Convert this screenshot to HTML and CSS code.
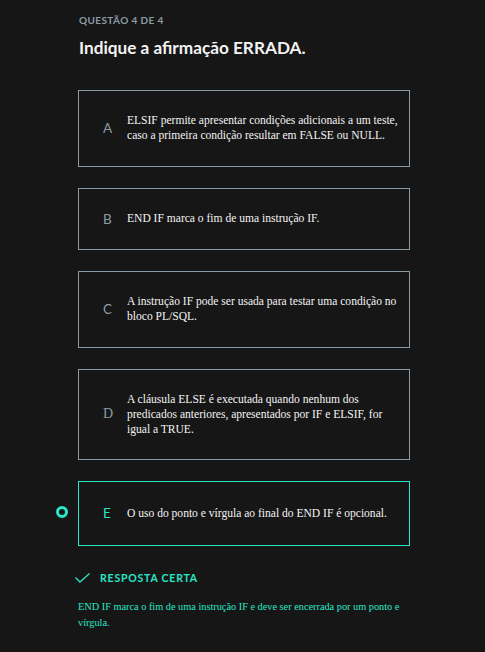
FILE: index.html
```html
<!DOCTYPE html>
<html lang="pt">
<head>
<meta charset="utf-8">
<link rel="stylesheet" href="styles.css">
</head>
<body>
<main class="quiz">
  <div class="counter">QUESTÃO 4 DE 4</div>
  <h1 class="title">Indique a afirmação ERRADA.</h1>
  <div class="options">
    <div class="option">
      <span class="letter">A</span>
      <span class="text">ELSIF permite apresentar condições adicionais a um teste, caso a primeira condição resultar em FALSE ou NULL.</span>
    </div>
    <div class="option">
      <span class="letter">B</span>
      <span class="text">END IF marca o fim de uma instrução IF.</span>
    </div>
    <div class="option">
      <span class="letter">C</span>
      <span class="text">A instrução IF pode ser usada para testar uma condição no bloco PL/SQL.</span>
    </div>
    <div class="option">
      <span class="letter serif">D</span>
      <span class="text">A cláusula ELSE é executada quando nenhum dos predicados anteriores, apresentados por IF e ELSIF, for igual a TRUE.</span>
    </div>
    <div class="option selected">
      <span class="radio"></span>
      <span class="letter">E</span>
      <span class="text">O uso do ponto e vírgula ao final do END IF é opcional.</span>
    </div>
  </div>
  <div class="result">
    <svg class="check" width="15" height="10" viewBox="0 0 15 10"><path d="M0.5 4.5 L5 9 L14.5 0.5" fill="none" stroke="#2ae6c8" stroke-width="1.3"/></svg>
    <span>RESPOSTA CERTA</span>
  </div>
  <p class="explain">END IF marca o fim de uma instrução IF e deve ser encerrada por um ponto e vírgula.</p>
</main>
</body>
</html>
```
FILE: styles.css
```css
html, body {
  margin: 0;
  background: #161616;
}
.quiz {
  width: 332px;
  margin-left: 78px;
  padding-top: 14px;
}
.counter {
  font-family: Lato, "Liberation Sans", sans-serif;
  font-weight: 700;
  font-size: 10px;
  letter-spacing: 0.4px;
  color: #8b9ca6;
  line-height: 12px;
  padding-left: 1px;
}
.title {
  margin: 12px 0 0 1px;
  font-family: Lato, "Liberation Sans", sans-serif;
  font-weight: 700;
  font-size: 17.2px;
  line-height: 20px;
  color: #f2f2f2;
}
.options {
  margin-top: 32px;
  display: flex;
  flex-direction: column;
  gap: 21px;
}
.option {
  position: relative;
  display: flex;
  align-items: center;
  border: 1px solid #8b9ca6;
  padding: 22px 10px 22.5px 24px;
}
.option.selected {
  border-color: #2ae6c8;
  padding-top: 23px;
  padding-bottom: 23.5px;
}
.letter {
  flex: 0 0 24px;
  font-family: Lato, "Liberation Sans", sans-serif;
  font-size: 13.5px;
  color: #8b9ca6;
}
.letter.serif {
  font-family: "Liberation Serif", serif;
  font-size: 14px;
}
.selected .letter {
  color: #2ae6c8;
}
.text {
  font-family: "Liberation Serif", serif;
  font-size: 11.55px;
  line-height: 15px;
  color: #f4f4f4;
}
.radio {
  position: absolute;
  left: -23px;
  top: 50%;
  width: 6px;
  height: 6px;
  margin-top: -7px;
  border: 3.5px solid #2ae6c8;
  border-radius: 50%;
  background: #161616;
}
.result {
  margin-top: 26px;
  margin-left: -3px;
  display: flex;
  align-items: center;
  gap: 10px;
  font-family: Lato, "Liberation Sans", sans-serif;
  font-weight: 700;
  font-size: 10.5px;
  letter-spacing: 0.8px;
  color: #2ae6c8;
}
.explain {
  margin: 15px 0 0 0;
  font-family: "Liberation Serif", serif;
  font-size: 10.3px;
  line-height: 16px;
  color: #2ae6c8;
}
```
